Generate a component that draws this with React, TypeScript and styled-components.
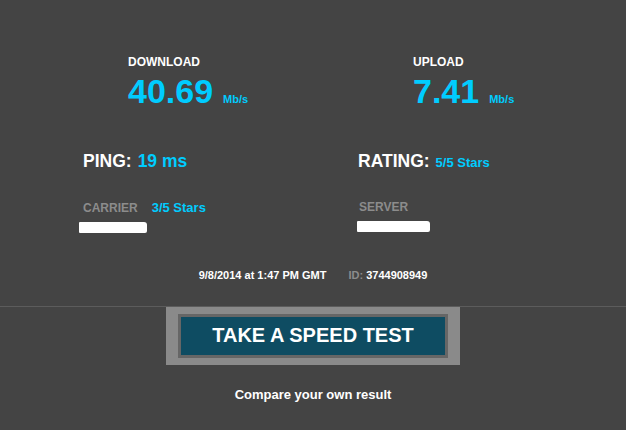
import React from "react";
import styled, { createGlobalStyle } from "styled-components";

const GlobalStyle = createGlobalStyle`
  html, body {
    margin: 0;
    padding: 0;
    background: #444444;
  }
  body {
    font-family: "Liberation Sans", Arial, sans-serif;
    font-weight: bold;
    color: #ffffff;
  }
`;

const CYAN = "#00ccff";
const GREY = "#8c8c8c";

const Page = styled.div`
  width: 626px;
  height: 430px;
  padding-top: 56px;
  box-sizing: border-box;
  display: flex;
  flex-direction: column;
  overflow: hidden;
`;

const Row = styled.div<{ $left: number; $col: number; $top?: number }>`
  display: grid;
  grid-template-columns: ${p => p.$col}px auto;
  padding-left: ${p => p.$left}px;
  margin-top: ${p => p.$top || 0}px;
`;

const Stat = styled.div`
  display: flex;
  flex-direction: column;
`;

const Label = styled.div<{ $muted?: boolean }>`
  font-size: 12px;
  line-height: 1;
  color: ${p => (p.$muted ? GREY : "#ffffff")};
  display: flex;
  align-items: baseline;
  gap: 14px;
`;

const ValueLine = styled.div`
  display: flex;
  align-items: baseline;
  gap: 10px;
  margin-top: 6px;
  color: ${CYAN};
`;

const BigNumber = styled.span`
  font-size: 34px;
  line-height: 1;
`;

const Unit = styled.span`
  font-size: 11px;
  line-height: 1;
`;

const Headline = styled.div`
  display: flex;
  align-items: baseline;
  gap: 6px;
  font-size: 17.5px;
  line-height: 1;
`;

const Cyan = styled.span<{ $size?: number }>`
  color: ${CYAN};
  font-size: ${p => (p.$size ? `${p.$size}px` : "inherit")};
`;

const Redacted = styled.div<{ $width: number; $shift: number }>`
  width: ${p => p.$width}px;
  height: 11px;
  margin-top: 8px;
  margin-left: ${p => p.$shift}px;
  background: #ffffff;
  border-radius: 1px 3px 2px 1px;
`;

const Meta = styled.div`
  display: flex;
  justify-content: center;
  gap: 22px;
  margin-top: 37px;
  font-size: 11px;
  line-height: 1;
`;

const MetaKey = styled.span`
  color: ${GREY};
`;

const Divider = styled.div`
  height: 1px;
  margin-top: 25px;
  background: #5c5c5c;
`;

const ButtonFrame = styled.div`
  align-self: center;
  width: 294px;
  height: 58px;
  box-sizing: border-box;
  padding: 7px 12px;
  background: #8a8a8a;
`;

const TestButton = styled.button`
  width: 100%;
  height: 100%;
  box-sizing: border-box;
  border: 3px solid #666666;
  background: #0e4c62;
  color: #ffffff;
  font-family: "Liberation Sans", Arial, sans-serif;
  font-weight: bold;
  font-size: 20px;
  line-height: 1;
  padding: 0 0 2px;
  cursor: pointer;
`;

const Footer = styled.div`
  margin-top: 23px;
  text-align: center;
  font-size: 13px;
  line-height: 1;
`;

export default function App() {
  return (
    <>
      <GlobalStyle />
      <Page>
        <Row $left={128} $col={285}>
          <Stat>
            <Label>DOWNLOAD</Label>
            <ValueLine>
              <BigNumber>40.69</BigNumber>
              <Unit>Mb/s</Unit>
            </ValueLine>
          </Stat>
          <Stat>
            <Label>UPLOAD</Label>
            <ValueLine>
              <BigNumber>7.41</BigNumber>
              <Unit>Mb/s</Unit>
            </ValueLine>
          </Stat>
        </Row>

        <Row $left={83} $col={275} $top={45}>
          <Headline>
            PING: <Cyan>19 ms</Cyan>
          </Headline>
          <Headline>
            RATING: <Cyan $size={13}>5/5 Stars</Cyan>
          </Headline>
        </Row>

        <Row $left={83} $col={276} $top={30}>
          <Stat>
            <Label $muted>
              CARRIER <Cyan $size={13}>3/5 Stars</Cyan>
            </Label>
            <Redacted $width={68} $shift={-4} />
          </Stat>
          <Stat>
            <Label $muted>SERVER</Label>
            <Redacted $width={73} $shift={-2} />
          </Stat>
        </Row>

        <Meta>
          <span>9/8/2014 at 1:47 PM GMT</span>
          <span>
            <MetaKey>ID:</MetaKey> 3744908949
          </span>
        </Meta>

        <Divider />

        <ButtonFrame>
          <TestButton>TAKE A SPEED TEST</TestButton>
        </ButtonFrame>

        <Footer>Compare your own result</Footer>
      </Page>
    </>
  );
}
